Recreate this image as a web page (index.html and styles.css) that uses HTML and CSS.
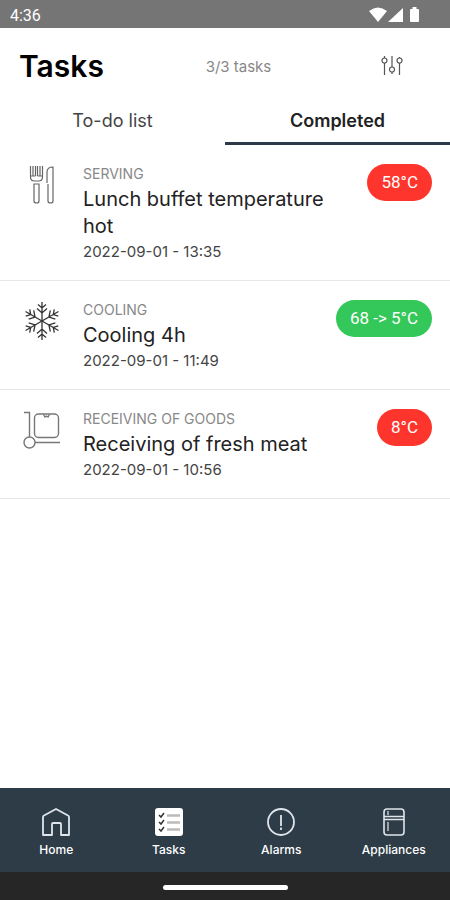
FILE: index.html
```html
<!DOCTYPE html>
<html lang="en">
<head>
  <meta charset="UTF-8">
  <meta name="viewport" content="width=device-width, initial-scale=1">
  <title>Tasks</title>
  <link rel="stylesheet" href="styles.css">
</head>
<body>

  <div class="status-bar">
    <span>4:36</span>
    <svg class="status-icons" width="52" height="16" viewBox="0 0 52 16" fill="#fff" aria-hidden="true">
      <path d="M0 4Q9-3 18 4L9 15Z"/>
      <path d="M34 1V15H19Z"/>
      <path d="M41 3Q41 2 42 2H43.500V0H47.500V2H49Q50 2 50 3V14Q50 15 49 15H42Q41 15 41 14Z"/>
    </svg>
  </div>

  <header class="header">
    <h1>Tasks</h1>
    <span class="count">3/3 tasks</span>
    <button class="filter" type="button" aria-label="Filter">
      <svg width="22" height="20" viewBox="0 0 22 20" fill="none" stroke="#555" stroke-width="1.200">
        <path d="M3.500 0V2M3.500 7V19M11 0V11M11 16V18M18.500 1V2M18.500 7V19"/>
        <circle cx="3.500" cy="4.500" r="2.500"/>
        <circle cx="11" cy="13.500" r="2.500"/>
        <circle cx="18.500" cy="4.500" r="2.500"/>
      </svg>
    </button>
  </header>

  <div class="tabs" role="tablist">
    <button class="tab" type="button" role="tab" aria-selected="false">To-do list</button>
    <button class="tab active" type="button" role="tab" aria-selected="true">Completed</button>
  </div>

  <main class="tasks">
    <article class="task">
      <svg class="task-icon" width="38" height="38" viewBox="0 0 38 38" fill="none" stroke="#666" stroke-width="1.200">
        <path d="M7.500 0V11Q7.500 15 11.500 15H15.500Q19.500 15 19.500 11V0M10 0V10M12.500 0V10M14.500 0V10M17 0V10M7.500 10H10M17 10H19.500M10 10H12.500M14.500 10H17"/>
        <path d="M11 18V35Q11 37 13.500 37T16 35V18Z"/>
        <path d="M24 17V6Q24 1 30 1V35Q30 37 27.500 37T25 35V18"/>
      </svg>
      <div class="task-text">
        <div class="category">SERVING</div>
        <h2>Lunch buffet temperature hot</h2>
        <time datetime="2022-09-01T13:35">2022-09-01 - 13:35</time>
      </div>
      <span class="badge red">58°C</span>
    </article>

    <article class="task">
      <svg class="task-icon" width="38" height="38" viewBox="0 0 38 38" fill="none" stroke="#333" stroke-width="1.300">
        <g id="arm">
          <path d="M19 19V0M15 2.500L19 6L23 2.500M14 6.500L19 11L24 6.500"/>
        </g>
        <use href="#arm" transform="rotate(60 19 19)"/>
        <use href="#arm" transform="rotate(120 19 19)"/>
        <use href="#arm" transform="rotate(180 19 19)"/>
        <use href="#arm" transform="rotate(240 19 19)"/>
        <use href="#arm" transform="rotate(300 19 19)"/>
      </svg>
      <div class="task-text">
        <div class="category">COOLING</div>
        <h2>Cooling 4h</h2>
        <time datetime="2022-09-01T11:49">2022-09-01 - 11:49</time>
      </div>
      <span class="badge green">68 -&gt; 5°C</span>
    </article>

    <article class="task">
      <svg class="task-icon" width="38" height="38" viewBox="0 0 38 38" fill="none" stroke="#777" stroke-width="1.400">
        <path d="M1 1.500H6.500V26M12 31.500H37"/>
        <circle cx="6.500" cy="31.500" r="5.500"/>
        <rect x="11.500" y="3" width="24" height="23.500" rx="4"/>
        <path d="M20.500 3.500L22 6L23.500 5L25 6L26.500 3.500"/>
      </svg>
      <div class="task-text">
        <div class="category">RECEIVING OF GOODS</div>
        <h2>Receiving of fresh meat</h2>
        <time datetime="2022-09-01T10:56">2022-09-01 - 10:56</time>
      </div>
      <span class="badge red">8°C</span>
    </article>
  </main>

  <nav class="nav">
    <a href="#home">
      <svg width="28" height="28" viewBox="0 0 28 28" fill="none" stroke="#dfe5ea" stroke-width="1.800" stroke-linejoin="round">
        <path d="M1 9Q1 8 2 7.500L14 1L26 7.500Q27 8 27 9V27H19V16Q19 15 18 15H11Q10 15 10 16V27H1Z"/>
      </svg>
      Home
    </a>
    <a href="#tasks" aria-current="page">
      <svg width="28" height="28" viewBox="0 0 28 28" fill="none">
        <rect width="28" height="28" rx="3" fill="#fff"/>
        <path d="M4 7L6 9L9 5M4 14L6 16L9 12M4 21L6 23L9 19" stroke="#333" stroke-width="1.500"/>
        <path d="M12 7.500H25M12 14.500H25M12 21.500H25" stroke="#bbb" stroke-width="2.500"/>
      </svg>
      Tasks
    </a>
    <a href="#alarms">
      <svg width="28" height="28" viewBox="0 0 28 28" fill="none" stroke="#dfe5ea" stroke-width="1.800">
        <circle cx="14" cy="14" r="13"/>
        <path d="M14 7V18M14 19.500V22"/>
      </svg>
      Alarms
    </a>
    <a href="#appliances">
      <svg width="28" height="28" viewBox="0 0 28 28" fill="none" stroke="#dfe5ea" stroke-width="1.600">
        <rect x="4" y="1" width="20" height="26" rx="3"/>
        <path d="M4 8.500H24M4 11.500H24"/>
        <path d="M8 3V7M8 14V23" stroke-width="1.200"/>
      </svg>
      Appliances
    </a>
  </nav>

  <div class="gesture-bar"><div class="handle"></div></div>

</body>
</html>
```
FILE: styles.css
```css
* {
  box-sizing: border-box;
}
body {
  margin: 0;
  min-height: 100vh;
  display: flex;
  flex-direction: column;
  font-family: Inter, "Liberation Sans", sans-serif;
  background: #fff;
  color: #222;
}
button {
  border: 0;
  background: none;
  font-family: inherit;
  cursor: pointer;
}
.status-bar {
  display: flex;
  align-items: center;
  justify-content: space-between;
  height: 28px;
  padding: 2px 29px 0 10px;
  background: #757575;
  color: #fff;
  font-family: Roboto, sans-serif;
  font-size: 16px;
}
.header {
  display: flex;
  align-items: center;
  justify-content: space-between;
  height: 69px;
  padding: 6px 39px 0 19px;
}
h1 {
  margin: 0;
  color: #000;
  font-size: 30px;
  font-weight: 600;
  line-height: 36px;
}
.count {
  padding-top: 2px;
  color: #888;
  font-size: 15px;
}
.filter {
  display: flex;
  padding: 8px;
}
.tabs {
  display: flex;
}
.tab {
  flex: 1;
  height: 48px;
  padding: 2px 0 0;
  border-bottom: 3px solid transparent;
  color: #444;
  font-size: 18px;
}
.tab.active {
  border-color: #2d3a48;
  color: #222;
  font-weight: 600;
}
.tasks {
  flex: 1;
}
.task {
  display: flex;
  align-items: flex-start;
  padding: 19px 18px 18px 23px;
  border-bottom: 1px solid #e6e6e6;
}
.task-icon {
  flex: none;
  margin: 2px 22px 0 0;
}
.task-text {
  flex: 1;
  padding-top: 2px;
}
.category {
  margin-bottom: 4px;
  color: #888;
  font-size: 14px;
  line-height: 16px;
}
h2 {
  margin: 0 0 2px;
  color: #222;
  font-size: 20px;
  font-weight: 400;
  line-height: 27px;
}
time {
  display: block;
  color: #444;
  font-size: 15px;
  line-height: 20px;
}
.badge {
  margin-left: 16px;
  padding: 0 14px;
  border-radius: 19px;
  color: #fff;
  font-family: Roboto, sans-serif;
  font-size: 17px;
  line-height: 37px;
  white-space: nowrap;
}
.red {
  background: #fd352c;
}
.green {
  background: #34c759;
}
.nav {
  display: flex;
  height: 84px;
  background: #2e3c48;
}
.nav a {
  flex: 1;
  display: flex;
  flex-direction: column;
  align-items: center;
  gap: 6px;
  padding-top: 20px;
  color: #fff;
  font-size: 12px;
  font-weight: 500;
  line-height: 16px;
  text-decoration: none;
}
.gesture-bar {
  display: flex;
  align-items: center;
  justify-content: center;
  height: 28px;
  padding-top: 2px;
  background: #262626;
}
.handle {
  width: 125px;
  height: 5px;
  border-radius: 3px;
  background: #fff;
}
```
